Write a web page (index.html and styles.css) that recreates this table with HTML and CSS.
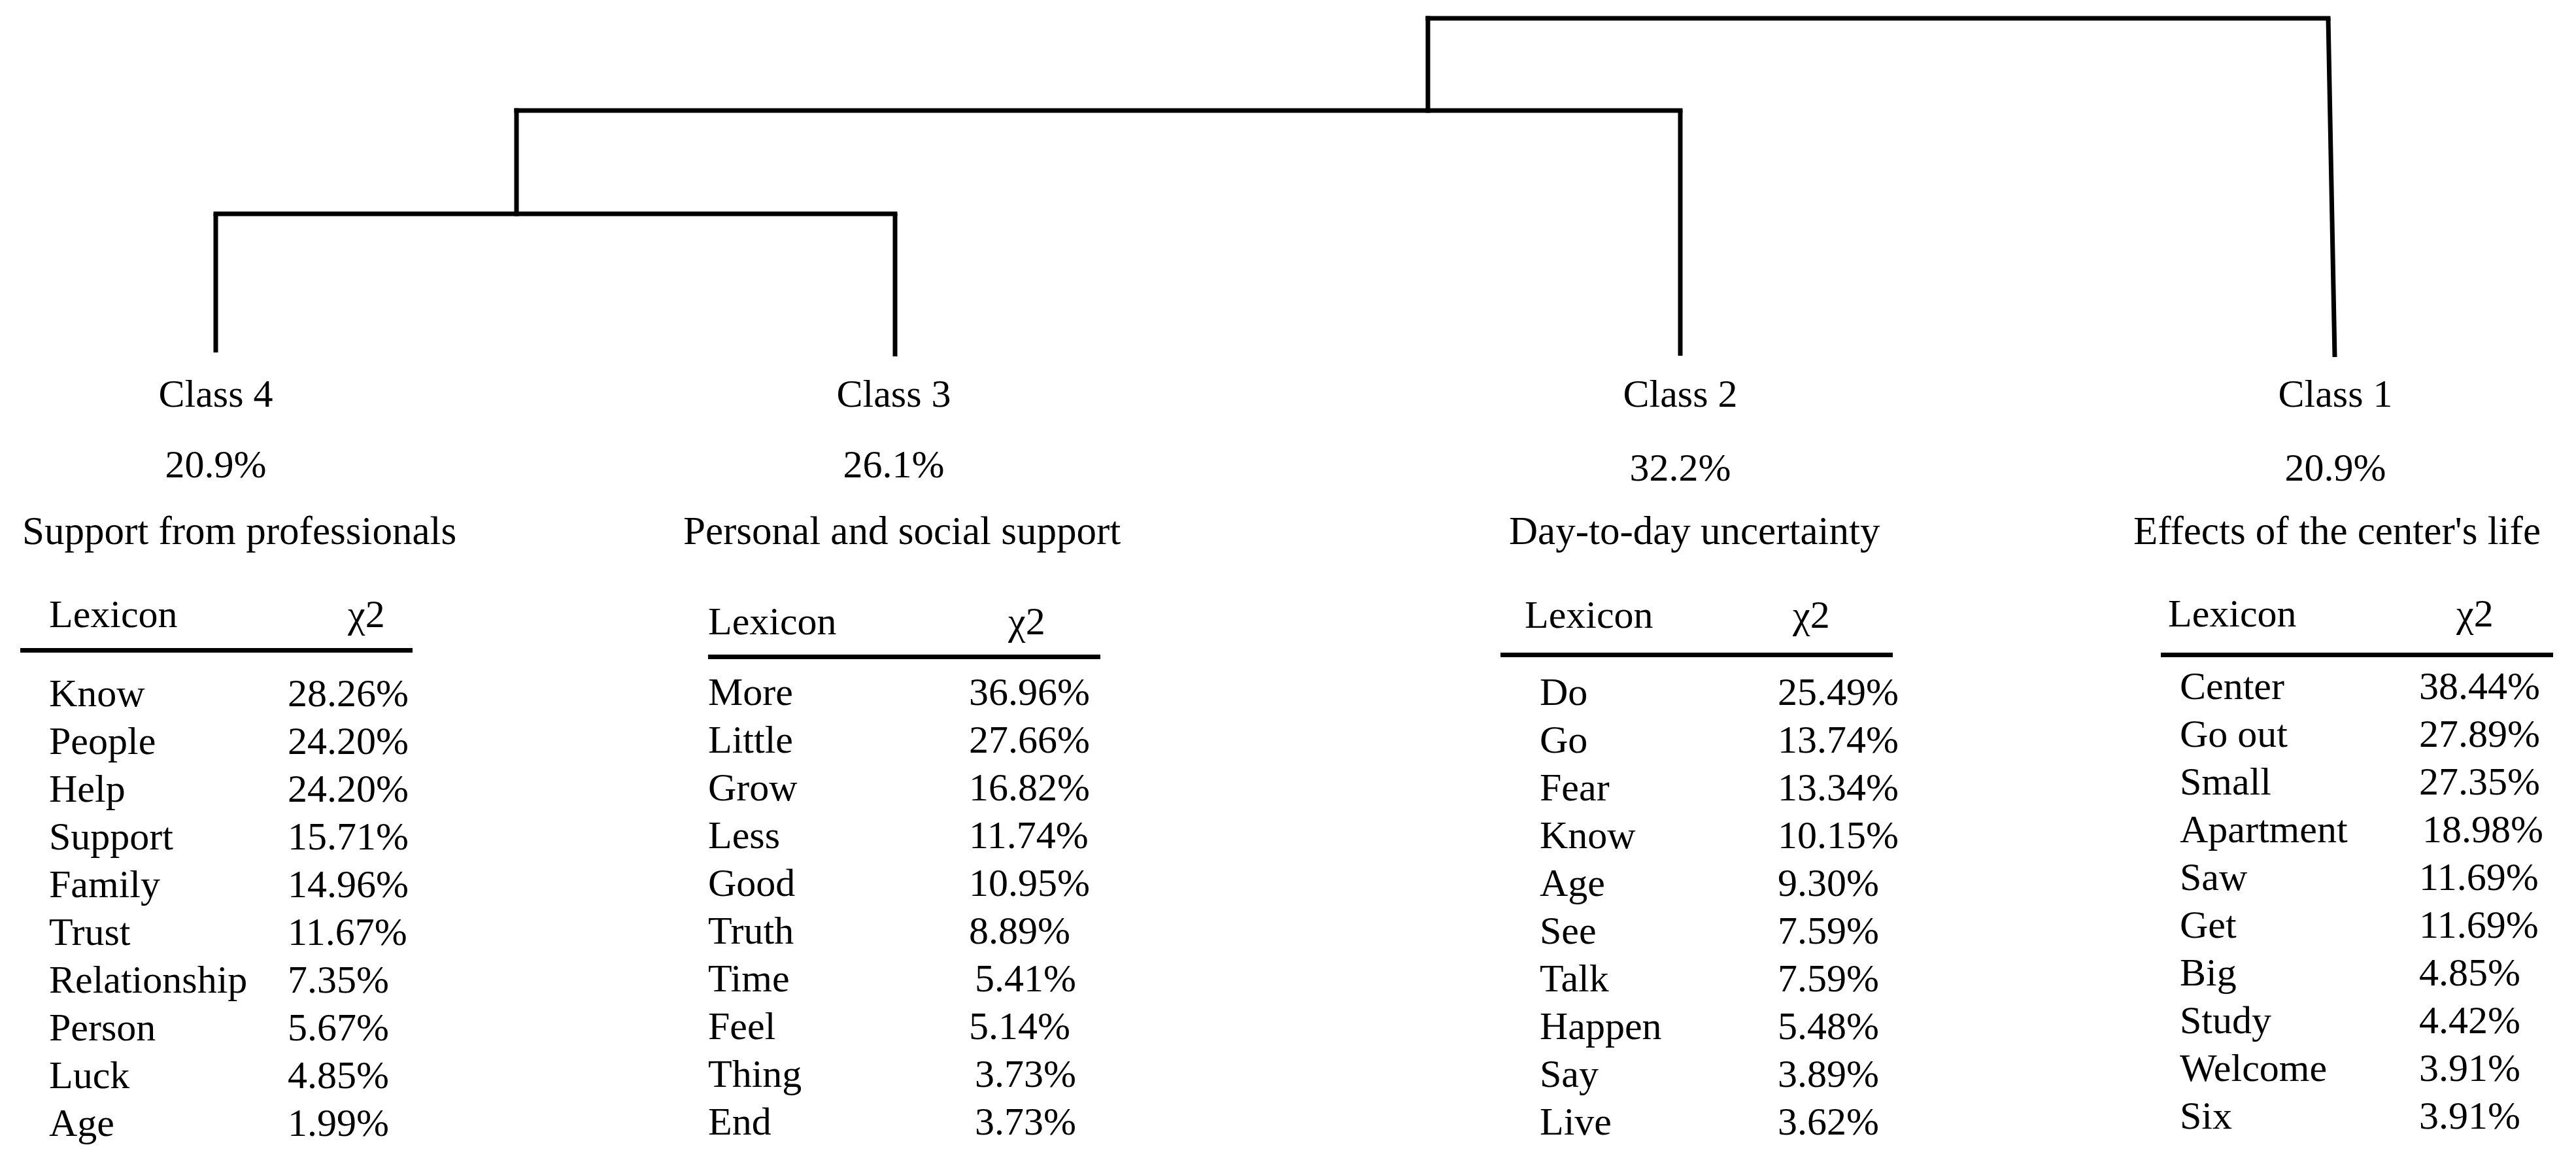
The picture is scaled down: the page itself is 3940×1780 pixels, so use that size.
FILE: index.html
```html
<!DOCTYPE html>
<html lang="en">
<head>
<meta charset="utf-8">
<title>Dendrogram of lexical classes</title>
<link rel="stylesheet" href="styles.css">
</head>
<body>
<div class="figure">
  <svg class="tree" width="3940" height="566" viewBox="0 0 3940 566" aria-hidden="true">
    <g stroke="#000" stroke-width="7" fill="none" stroke-linecap="square">
      <line x1="2184" y1="28" x2="3561" y2="28"/>
      <line x1="2184" y1="28" x2="2184" y2="169"/>
      <line x1="790" y1="169" x2="2570" y2="169"/>
      <line x1="790" y1="169" x2="790" y2="327"/>
      <line x1="330" y1="327" x2="1369" y2="327"/>
    </g>
    <g stroke="#000" stroke-width="7" fill="none">
      <line x1="330" y1="327" x2="330" y2="539"/>
      <line x1="1369" y1="327" x2="1369" y2="545"/>
      <line x1="2570" y1="169" x2="2570" y2="544"/>
      <line x1="3561" y1="28" x2="3571" y2="546"/>
    </g>
  </svg>

  <div class="classes">
    <section class="class class-4">
      <div class="label">Class 4</div>
      <div class="pct">20.9%</div>
      <div class="title">Support from professionals</div>
      <div class="lex">
        <div class="lex-head"><span>Lexicon</span><span>χ2</span></div>
        <div class="lex-body">
          <div class="lex-row"><span>Know</span><span>28.26%</span></div>
          <div class="lex-row"><span>People</span><span>24.20%</span></div>
          <div class="lex-row"><span>Help</span><span>24.20%</span></div>
          <div class="lex-row"><span>Support</span><span>15.71%</span></div>
          <div class="lex-row"><span>Family</span><span>14.96%</span></div>
          <div class="lex-row"><span>Trust</span><span>11.67%</span></div>
          <div class="lex-row"><span>Relationship</span><span>7.35%</span></div>
          <div class="lex-row"><span>Person</span><span>5.67%</span></div>
          <div class="lex-row"><span>Luck</span><span>4.85%</span></div>
          <div class="lex-row"><span>Age</span><span>1.99%</span></div>
        </div>
      </div>
    </section>

    <section class="class class-3">
      <div class="label">Class 3</div>
      <div class="pct">26.1%</div>
      <div class="title">Personal and social support</div>
      <div class="lex">
        <div class="lex-head"><span>Lexicon</span><span>χ2</span></div>
        <div class="lex-body">
          <div class="lex-row"><span>More</span><span>36.96%</span></div>
          <div class="lex-row"><span>Little</span><span>27.66%</span></div>
          <div class="lex-row"><span>Grow</span><span>16.82%</span></div>
          <div class="lex-row"><span>Less</span><span>11.74%</span></div>
          <div class="lex-row"><span>Good</span><span>10.95%</span></div>
          <div class="lex-row"><span>Truth</span><span>8.89%</span></div>
          <div class="lex-row"><span>Time</span><span class="nudge">5.41%</span></div>
          <div class="lex-row"><span>Feel</span><span>5.14%</span></div>
          <div class="lex-row"><span>Thing</span><span class="nudge">3.73%</span></div>
          <div class="lex-row"><span>End</span><span class="nudge">3.73%</span></div>
        </div>
      </div>
    </section>

    <section class="class class-2">
      <div class="label">Class 2</div>
      <div class="pct">32.2%</div>
      <div class="title">Day-to-day uncertainty</div>
      <div class="lex">
        <div class="lex-head"><span>Lexicon</span><span>χ2</span></div>
        <div class="lex-body">
          <div class="lex-row"><span>Do</span><span>25.49%</span></div>
          <div class="lex-row"><span>Go</span><span>13.74%</span></div>
          <div class="lex-row"><span>Fear</span><span>13.34%</span></div>
          <div class="lex-row"><span>Know</span><span>10.15%</span></div>
          <div class="lex-row"><span>Age</span><span>9.30%</span></div>
          <div class="lex-row"><span>See</span><span>7.59%</span></div>
          <div class="lex-row"><span>Talk</span><span>7.59%</span></div>
          <div class="lex-row"><span>Happen</span><span>5.48%</span></div>
          <div class="lex-row"><span>Say</span><span>3.89%</span></div>
          <div class="lex-row"><span>Live</span><span>3.62%</span></div>
        </div>
      </div>
    </section>

    <section class="class class-1">
      <div class="label">Class 1</div>
      <div class="pct">20.9%</div>
      <div class="title">Effects of the center's life</div>
      <div class="lex">
        <div class="lex-head"><span>Lexicon</span><span>χ2</span></div>
        <div class="lex-body">
          <div class="lex-row"><span>Center</span><span>38.44%</span></div>
          <div class="lex-row"><span>Go out</span><span>27.89%</span></div>
          <div class="lex-row"><span>Small</span><span>27.35%</span></div>
          <div class="lex-row"><span>Apartment</span><span class="nudge-s">18.98%</span></div>
          <div class="lex-row"><span>Saw</span><span>11.69%</span></div>
          <div class="lex-row"><span>Get</span><span>11.69%</span></div>
          <div class="lex-row"><span>Big</span><span>4.85%</span></div>
          <div class="lex-row"><span>Study</span><span>4.42%</span></div>
          <div class="lex-row"><span>Welcome</span><span>3.91%</span></div>
          <div class="lex-row"><span>Six</span><span>3.91%</span></div>
        </div>
      </div>
    </section>
  </div>
</div>
</body>
</html>
```

FILE: styles.css
```css
html, body {
  margin: 0;
  padding: 0;
  background: #ffffff;
}

body {
  font-family: "Liberation Serif", "Times New Roman", serif;
  font-size: 60px;
  color: #000000;
}

.figure {
  width: 3940px;
  height: 1780px;
  overflow: hidden;
}

.tree {
  display: block;
  width: 3940px;
  height: 566px;
}

.classes {
  display: flex;
  align-items: flex-start;
}

.class {
  flex: none;
  display: flex;
  flex-direction: column;
  --pct-shift: 0px;
}

.class-4 {
  width: 660px;
  margin-left: 0;
  --title-x: 34px;
  --table-x: 31px;
  --head-top: 55px;
  --rule-gap: 16px;
  --body-gap: 26px;
  --lexh-x: 44px;
  --chi-x: 501px;
  --word-x: 44px;
  --val-x: 409px;
}

.class-3 {
  width: 654px;
  margin-left: 380px;
  --title-x: 5px;
  --table-x: 43px;
  --head-top: 66px;
  --rule-gap: 15px;
  --body-gap: 14px;
  --lexh-x: 0px;
  --chi-x: 459px;
  --word-x: 0px;
  --val-x: 399px;
}

.class-2 {
  width: 600px;
  margin-left: 576px;
  --pct-shift: 5px;
  --title-x: 38px;
  --table-x: 25px;
  --head-top: 56px;
  --rule-gap: 22px;
  --body-gap: 17px;
  --lexh-x: 37px;
  --chi-x: 447px;
  --word-x: 60px;
  --val-x: 424px;
}

.class-1 {
  width: 640px;
  margin-left: 382px;
  --pct-shift: 5px;
  --title-x: 11px;
  --table-x: 53px;
  --head-top: 54px;
  --rule-gap: 24px;
  --body-gap: 8px;
  --lexh-x: 11px;
  --chi-x: 452px;
  --word-x: 29px;
  --val-x: 395px;
}

.label {
  line-height: 72px;
  text-align: center;
  white-space: nowrap;
}

.pct {
  line-height: 72px;
  text-align: center;
  white-space: nowrap;
  margin-top: calc(36px + var(--pct-shift));
}

.title {
  font-size: 61px;
  line-height: 72px;
  white-space: nowrap;
  margin-top: calc(30px - var(--pct-shift));
  padding-left: var(--title-x);
}

.lex {
  width: 600px;
  margin-left: var(--table-x);
  margin-top: var(--head-top);
}

.lex-head {
  display: grid;
  grid-template-columns: calc(var(--chi-x) - var(--lexh-x)) auto;
  padding-left: var(--lexh-x);
  line-height: 72px;
  padding-bottom: var(--rule-gap);
  border-bottom: 7px solid #000000;
  white-space: nowrap;
}

.lex-body {
  margin-top: var(--body-gap);
}

.lex-row {
  display: grid;
  grid-template-columns: calc(var(--val-x) - var(--word-x)) auto;
  padding-left: var(--word-x);
  line-height: 73px;
  white-space: nowrap;
}

.nudge {
  padding-left: 9px;
}

.nudge-s {
  padding-left: 5px;
}
```
